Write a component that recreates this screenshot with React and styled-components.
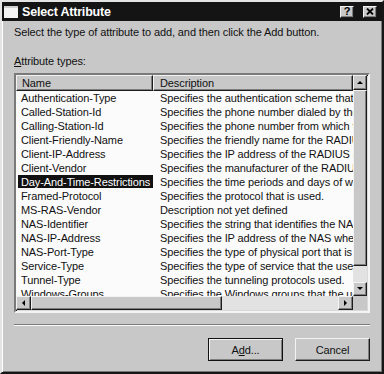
import React from 'react';
import styled, { createGlobalStyle, css } from 'styled-components';

const Global = createGlobalStyle`
  html, body { margin: 0; padding: 0; background: #c8c8c8; }
  body { font-family: "Liberation Sans", Arial, sans-serif; }
`;

const raised = css`
  background: #c8c8c8;
  border: 1px solid;
  border-color: #f2f2f2 #1c1c1c #1c1c1c #f2f2f2;
  box-shadow: inset -1px -1px 0 #7e7e7e;
  box-sizing: border-box;
`;

const Window = styled.div`
  box-sizing: border-box;
  width: 384px;
  height: 374px;
  background: #c8c8c8;
  border: 2px solid;
  border-color: #e4e4e4 #161616 #161616 #e4e4e4;
  box-shadow: inset 1px 1px 0 #fff, inset -1px -1px 0 #777;
  display: flex;
  flex-direction: column;
  font-size: 11px;
  letter-spacing: -0.1px;
  color: #111;
`;

const TitleBar = styled.div`
  height: 19px;
  background: #141414;
  display: flex;
  align-items: center;
  padding: 0 5px 0 2px;
  gap: 4px;
`;

const TitleText = styled.div`
  flex: 1;
  color: #fff;
  font-weight: bold;
  font-size: 12.5px;
  letter-spacing: -0.2px;
`;

const CaptionButton = styled.div`
  ${raised};
  width: 14px;
  height: 12px;
  display: flex;
  align-items: center;
  justify-content: center;
  font-weight: bold;
  font-size: 11px;
  line-height: 1;
  color: #000;
  margin-left: ${p => (p.$gap ? '5px' : '0')};
`;

const Body = styled.div`
  flex: 1;
  display: flex;
  flex-direction: column;
  padding: 5px 12px 0 12px;
`;

const Line = styled.div`
  line-height: 13px;
  margin-top: ${p => p.$mt || 0}px;
`;

const U = styled.span`
  text-decoration: underline;
`;

const ListBox = styled.div`
  margin-top: 5px;
  width: 356px;
  height: 240px;
  box-sizing: border-box;
  border: 2px solid;
  border-color: #7a7a7a #f4f4f4 #f4f4f4 #7a7a7a;
  box-shadow: inset 1px 1px 0 #1a1a1a, inset -1px -1px 0 #d8d8d8;
  display: grid;
  grid-template-columns: 337px 14px;
  grid-template-rows: 221px 14px;
  background: #fbfbfb;
`;

const Main = styled.div`
  overflow: hidden;
  background: #fbfbfb;
  display: flex;
  flex-direction: column;
`;

const HeaderRow = styled.div`
  display: flex;
  height: 16px;
  flex: none;
`;

const HeaderCell = styled.div`
  ${raised};
  height: 16px;
  width: ${p => p.$w};
  flex: ${p => (p.$grow ? 1 : 'none')};
  padding: 0 0 0 ${p => p.$pl}px;
  line-height: 14px;
  white-space: nowrap;
  overflow: hidden;
`;

const Row = styled.div`
  display: flex;
  height: 14px;
  line-height: 14px;
  flex: none;
  white-space: nowrap;
`;

const NameCell = styled.div`
  width: 137px;
  flex: none;
  padding-left: 2px;
  box-sizing: border-box;
  overflow: hidden;
`;

const NameText = styled.span`
  display: inline-block;
  padding: 0 3px;
  height: 13px;
  line-height: 14px;
  background: ${p => (p.$sel ? '#111' : 'transparent')};
  color: ${p => (p.$sel ? '#fff' : '#111')};
`;

const DescCell = styled.div`
  flex: 1;
  padding-left: 7px;
  overflow: hidden;
`;

const VScroll = styled.div`
  display: flex;
  flex-direction: column;
  background: #e2e2e2;
`;

const HScroll = styled.div`
  display: flex;
  background: #e2e2e2;
`;

const ArrowButton = styled.div`
  ${raised};
  width: ${p => p.$w || 14}px;
  height: ${p => p.$h || 14}px;
  flex: none;
  display: flex;
  align-items: center;
  justify-content: center;
`;

const Thumb = styled.div`
  ${raised};
  flex: none;
  width: ${p => (p.$horizontal ? `${p.$size}px` : '14px')};
  height: ${p => (p.$horizontal ? '14px' : `${p.$size}px`)};
`;

const Track = styled.div`
  flex: 1;
  background: #e2e2e2;
`;

const Corner = styled.div`
  background: #c8c8c8;
`;

const Separator = styled.div`
  margin-top: 11px;
  width: 356px;
  height: 1px;
  background: #7a7a7a;
  border-bottom: 1px solid #fafafa;
`;

const ButtonRow = styled.div`
  margin-top: 12px;
  display: flex;
  justify-content: flex-end;
  gap: 12px;
`;

const PushButton = styled.button`
  ${raised};
  width: 75px;
  height: 23px;
  font-family: inherit;
  font-size: 11px;
  letter-spacing: -0.1px;
  color: #111;
  padding: 0;
  ${p =>
    p.$default &&
    css`
      outline: 1px solid #111;
      outline-offset: -1px;
      border-color: #111;
      box-shadow: inset 1px 1px 0 #f2f2f2, inset -1px -1px 0 #7e7e7e;
    `}
`;

const Tri = ({ dir }) => {
  const pts = {
    up: '1,5 4,2 7,5',
    down: '1,2 4,5 7,2',
    left: '5,1 2,4 5,7',
    right: '2,1 5,4 2,7',
  }[dir];
  return (
    <svg width="8" height="8" viewBox="0 0 8 8">
      <polygon points={pts} fill="#000" />
    </svg>
  );
};

const rows = [
  ['Authentication-Type', 'Specifies the authentication scheme that is used to verify the user'],
  ['Called-Station-Id', 'Specifies the phone number dialed by the user'],
  ['Calling-Station-Id', 'Specifies the phone number from which the call originated'],
  ['Client-Friendly-Name', 'Specifies the friendly name for the RADIUS client'],
  ['Client-IP-Address', 'Specifies the IP address of the RADIUS client'],
  ['Client-Vendor', 'Specifies the manufacturer of the RADIUS proxy or NAS'],
  ['Day-And-Time-Restrictions', 'Specifies the time periods and days of week during which'],
  ['Framed-Protocol', 'Specifies the protocol that is used.'],
  ['MS-RAS-Vendor', 'Description not yet defined'],
  ['NAS-Identifier', 'Specifies the string that identifies the NAS that originated'],
  ['NAS-IP-Address', 'Specifies the IP address of the NAS where the request'],
  ['NAS-Port-Type', 'Specifies the type of physical port that is used by the NAS'],
  ['Service-Type', 'Specifies the type of service that the user has requested'],
  ['Tunnel-Type', 'Specifies the tunneling protocols used.'],
  ['Windows-Groups', 'Specifies the Windows groups that the user belongs to'],
];

export default function App() {
  return (
    <>
      <Global />
      <Window>
        <TitleBar>
          <svg width="14" height="12" viewBox="0 0 14 12">
            <rect x="0" y="0" width="14" height="12" fill="#f4f4f4" />
            <rect x="0" y="0" width="14" height="2" fill="#cfcfcf" />
          </svg>
          <TitleText>Select Attribute</TitleText>
          <CaptionButton>?</CaptionButton>
          <CaptionButton $gap>
            <svg width="8" height="7" viewBox="0 0 8 7">
              <path d="M1 0.5 L7 6.5 M7 0.5 L1 6.5" stroke="#000" strokeWidth="1.8" />
            </svg>
          </CaptionButton>
        </TitleBar>
        <Body>
          <Line>Select the type of attribute to add, and then click the Add button.</Line>
          <Line $mt={16}>
            <U>A</U>ttribute types:
          </Line>
          <ListBox>
            <Main>
              <HeaderRow>
                <HeaderCell $w="137px" $pl={5}>Name</HeaderCell>
                <HeaderCell $grow $pl={6}>Description</HeaderCell>
              </HeaderRow>
              {rows.map(([n, d]) => (
                <Row key={n}>
                  <NameCell>
                    <NameText $sel={n === 'Day-And-Time-Restrictions'}>{n}</NameText>
                  </NameCell>
                  <DescCell>{d}</DescCell>
                </Row>
              ))}
            </Main>
            <VScroll>
              <ArrowButton $h={15}><Tri dir="up" /></ArrowButton>
              <Thumb $size={176} />
              <Track />
              <ArrowButton><Tri dir="down" /></ArrowButton>
            </VScroll>
            <HScroll>
              <ArrowButton $w={15}><Tri dir="left" /></ArrowButton>
              <Thumb $horizontal $size={191} />
              <Track />
              <ArrowButton $w={15}><Tri dir="right" /></ArrowButton>
            </HScroll>
            <Corner />
          </ListBox>
          <Separator />
          <ButtonRow>
            <PushButton $default>
              A<U>d</U>d...
            </PushButton>
            <PushButton>Cancel</PushButton>
          </ButtonRow>
        </Body>
      </Window>
    </>
  );
}
